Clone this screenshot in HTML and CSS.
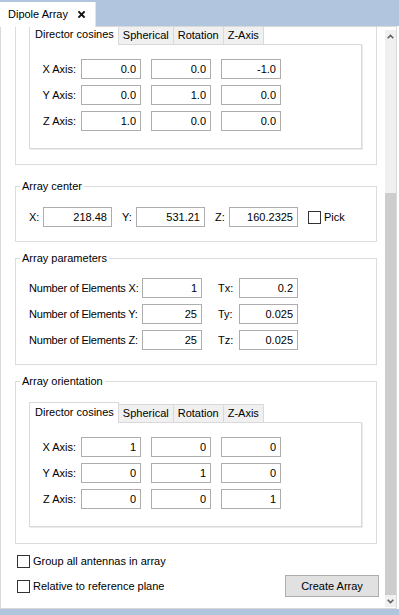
FILE: index.html
```html
<!DOCTYPE html>
<html>
<head>
    <meta charset="UTF-8">
    <meta name="viewport" content="width=device-width, initial-scale=1.0">
    <title>Dipole Array</title>
    <link rel="stylesheet" href="styles.css">
</head>
<body>
    <div class="window">
        <div class="doc-tabs">
            <div class="doc-tab">
                <span>Dipole Array</span>
                <svg class="close-icon" width="7" height="7" viewBox="0 0 7 7">
                    <path d="M1 1 L6 6 M6 1 L1 6" stroke="#111" stroke-width="1.8" stroke-linecap="square"/>
                </svg>
            </div>
        </div>

        <div class="pane">
            <div class="viewport">
                <div class="content">
                    <!-- scrolled: top of this group sits above the viewport -->
                    <div class="group group-first">
                        <div class="group-body orient-body">
                            <div class="tab-widget">
                                <div class="tab-bar">
                                    <div class="tab active">Director cosines</div>
                                    <div class="tab">Spherical</div>
                                    <div class="tab">Rotation</div>
                                    <div class="tab">Z-Axis</div>
                                </div>
                                <div class="tab-page">
                                    <div class="axis-row">
                                        <label class="axis-label">X Axis:</label>
                                        <input class="field" type="text" value="0.0">
                                        <input class="field" type="text" value="0.0">
                                        <input class="field" type="text" value="-1.0">
                                    </div>
                                    <div class="axis-row">
                                        <label class="axis-label">Y Axis:</label>
                                        <input class="field" type="text" value="0.0">
                                        <input class="field" type="text" value="1.0">
                                        <input class="field" type="text" value="0.0">
                                    </div>
                                    <div class="axis-row">
                                        <label class="axis-label">Z Axis:</label>
                                        <input class="field" type="text" value="1.0">
                                        <input class="field" type="text" value="0.0">
                                        <input class="field" type="text" value="0.0">
                                    </div>
                                </div>
                            </div>
                        </div>
                    </div>

                    <fieldset class="group group-center">
                        <legend>Array center</legend>
                        <div class="group-body center-body">
                            <div class="center-row">
                                <label class="coord-label">X:</label>
                                <input class="field coord-field" type="text" value="218.48">
                                <label class="coord-label">Y:</label>
                                <input class="field coord-field" type="text" value="531.21">
                                <label class="coord-label">Z:</label>
                                <input class="field coord-field" type="text" value="160.2325">
                                <label class="check-label pick">
                                    <input class="check" type="checkbox">
                                    <span>Pick</span>
                                </label>
                            </div>
                        </div>
                    </fieldset>

                    <fieldset class="group">
                        <legend>Array parameters</legend>
                        <div class="group-body params-body">
                            <div class="param-row">
                                <label class="param-label">Number of Elements X:</label>
                                <input class="field count-field" type="text" value="1">
                                <label class="step-label">Tx:</label>
                                <input class="field step-field" type="text" value="0.2">
                            </div>
                            <div class="param-row">
                                <label class="param-label">Number of Elements Y:</label>
                                <input class="field count-field" type="text" value="25">
                                <label class="step-label">Ty:</label>
                                <input class="field step-field" type="text" value="0.025">
                            </div>
                            <div class="param-row">
                                <label class="param-label">Number of Elements Z:</label>
                                <input class="field count-field" type="text" value="25">
                                <label class="step-label">Tz:</label>
                                <input class="field step-field" type="text" value="0.025">
                            </div>
                        </div>
                    </fieldset>

                    <fieldset class="group">
                        <legend>Array orientation</legend>
                        <div class="group-body orient-body">
                            <div class="tab-widget">
                                <div class="tab-bar">
                                    <div class="tab active">Director cosines</div>
                                    <div class="tab">Spherical</div>
                                    <div class="tab">Rotation</div>
                                    <div class="tab">Z-Axis</div>
                                </div>
                                <div class="tab-page">
                                    <div class="axis-row">
                                        <label class="axis-label">X Axis:</label>
                                        <input class="field" type="text" value="1">
                                        <input class="field" type="text" value="0">
                                        <input class="field" type="text" value="0">
                                    </div>
                                    <div class="axis-row">
                                        <label class="axis-label">Y Axis:</label>
                                        <input class="field" type="text" value="0">
                                        <input class="field" type="text" value="1">
                                        <input class="field" type="text" value="0">
                                    </div>
                                    <div class="axis-row">
                                        <label class="axis-label">Z Axis:</label>
                                        <input class="field" type="text" value="0">
                                        <input class="field" type="text" value="0">
                                        <input class="field" type="text" value="1">
                                    </div>
                                </div>
                            </div>
                        </div>
                    </fieldset>

                    <div class="footer">
                        <div class="footer-row">
                            <label class="check-label">
                                <input class="check" type="checkbox">
                                <span>Group all antennas in array</span>
                            </label>
                        </div>
                        <div class="footer-row">
                            <label class="check-label">
                                <input class="check" type="checkbox">
                                <span>Relative to reference plane</span>
                            </label>
                            <button class="push-button">Create Array</button>
                        </div>
                    </div>
                </div>
            </div>

            <div class="scrollbar">
                <div class="sb-button">
                    <svg width="7" height="5" viewBox="0 0 7 5">
                        <path d="M0.7 4.3 L3.5 1.5 L6.3 4.3" fill="none" stroke="#606060" stroke-width="1.6"/>
                    </svg>
                </div>
                <div class="sb-track">
                    <div class="sb-thumb"></div>
                </div>
                <div class="sb-button">
                    <svg width="7" height="5" viewBox="0 0 7 5">
                        <path d="M0.7 0.7 L3.5 3.5 L6.3 0.7" fill="none" stroke="#606060" stroke-width="1.6"/>
                    </svg>
                </div>
            </div>
        </div>

        <div class="status-strip"></div>
    </div>
</body>
</html>
```

FILE: styles.css
```css
* {
    margin: 0;
    padding: 0;
    box-sizing: border-box;
}

body {
    font-family: "Liberation Sans", Arial, sans-serif;
    font-size: 11px;
    color: #000;
    background: #fff;
}

.window {
    width: 399px;
    height: 615px;
    display: flex;
    flex-direction: column;
    overflow: hidden;
}

/* document tab strip */
.doc-tabs {
    height: 26px;
    flex-shrink: 0;
    display: flex;
    align-items: flex-end;
    background: #b1c5df;
}

.doc-tab {
    width: 96px;
    height: 25px;
    margin-bottom: -1px;
    z-index: 1;
    display: flex;
    align-items: center;
    gap: 10px;
    padding-left: 8px;
    padding-bottom: 1px;
    background: #fff;
    border-right: 1px solid #e4e4e4;
}

.close-icon {
    display: block;
}

/* main pane */
.pane {
    flex: 1;
    display: flex;
    margin-right: 2px;
    border: 1px solid #d9d9d9;
    background: #fff;
    min-height: 0;
}

.viewport {
    flex: 1;
    overflow: hidden;
}

.content {
    margin-top: -18px;
    padding: 0 8px 0 14px;
}

.status-strip {
    height: 6px;
    flex-shrink: 0;
    background: #b1c5df;
}

/* group boxes */
.group {
    border: 1px solid #dcdcdc;
    padding: 0;
    margin-top: 10px;
}

.group-first {
    margin-top: 0;
}

.group-center {
    margin-top: 15px;
}

.group legend {
    margin-left: 4px;
    padding: 0 2px;
    line-height: 13px;
}

.group-body {
    padding: 14px 14px 14px 13px;
}

.params-body {
    padding-top: 13px;
    display: flex;
    flex-direction: column;
    gap: 6px;
}

.orient-body {
    padding-top: 14px;
    padding-bottom: 16px;
}

.group-first .orient-body {
    padding-bottom: 15px;
}

/* inputs */
.field {
    width: 60px;
    height: 20px;
    border: 1px solid #adadad;
    background: #fff;
    font: inherit;
    color: #000;
    text-align: right;
    padding: 0 4px;
    outline: none;
}

/* tab widget */
.tab-bar {
    display: flex;
    align-items: flex-end;
    height: 20px;
}

.tab {
    height: 18px;
    line-height: 16px;
    padding: 0 4px;
    margin-right: -1px;
    background: #f0f0f0;
    border: 1px solid #d9d9d9;
    border-bottom: none;
}

.tab.active {
    height: 21px;
    line-height: 18px;
    padding: 0 4px 0 5px;
    margin-bottom: -1px;
    background: #fff;
    z-index: 1;
}

.tab-page {
    border: 1px solid #d9d9d9;
    box-shadow: 1px 1px 0 #ebebeb;
    padding: 14px 0 17px;
    display: flex;
    flex-direction: column;
    gap: 6px;
}

.axis-row {
    display: flex;
    align-items: center;
    gap: 10px;
}

.axis-label {
    width: 51px;
    margin-right: -10px;
    padding-right: 5px;
    text-align: right;
}

/* array center */
.center-row {
    display: flex;
    align-items: center;
}

.coord-label {
    width: 14px;
}

.coord-field {
    width: 69px;
    margin-right: 10px;
}

.check-label {
    display: flex;
    align-items: center;
    gap: 3px;
    white-space: nowrap;
}

.check {
    appearance: none;
    width: 13px;
    height: 13px;
    border: 1px solid #333;
    background: #fff;
    margin: 0;
}

/* array parameters */
.param-row {
    display: flex;
    align-items: center;
}

.param-label {
    width: 113px;
    white-space: nowrap;
    letter-spacing: -0.2px;
}

.count-field {
    flex-shrink: 0;
}

.step-label {
    width: 21px;
    margin-left: 16px;
}

.step-field {
    width: 59px;
}

/* footer */
.footer {
    margin-top: 9px;
    padding-left: 2px;
    display: flex;
    flex-direction: column;
    gap: 6px;
}

.footer-row {
    display: flex;
    align-items: center;
    justify-content: space-between;
    min-height: 16px;
}

.push-button {
    width: 94px;
    height: 22px;
    margin-right: -2px;
    border: 1px solid #adadad;
    background: #e1e1e1;
    font: inherit;
    color: #000;
}

/* scrollbar */
.scrollbar {
    width: 11px;
    margin: 3px 0 1px;
    display: flex;
    flex-direction: column;
    background: #f0f0f0;
}

.sb-button {
    height: 12px;
    display: flex;
    align-items: center;
    justify-content: center;
}

.sb-track {
    flex: 1;
    display: flex;
    flex-direction: column;
    justify-content: flex-end;
}

.sb-thumb {
    height: 402px;
    background: #cdcdcd;
}
```
